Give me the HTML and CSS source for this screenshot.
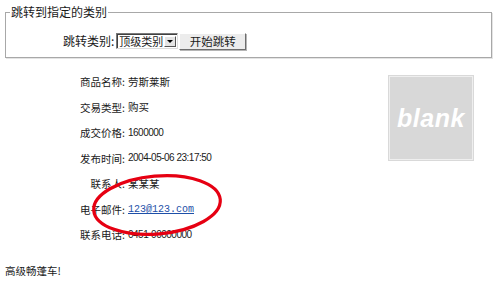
FILE: index.html
```html
<!DOCTYPE html>
<html lang="zh-CN">
<head>
<meta charset="utf-8">
<title>商品详情</title>
<link rel="stylesheet" href="styles.css">
</head>
<body>
<fieldset class="jump">
  <legend class="jump-legend">跳转到指定的类别</legend>
  <div class="jump-row">
    <span class="jump-label">跳转类别:</span>
    <span class="select"><span class="select-text">顶级类别</span><span class="select-arrow"><span class="tri"></span></span></span>
    <button class="btn" type="button">开始跳转</button>
  </div>
</fieldset>

<div class="detail">
  <div class="info">
    <div class="row"><span class="lbl">商品名称:</span><span class="val">劳斯莱斯</span></div>
    <div class="row"><span class="lbl">交易类型:</span><span class="val">购买</span></div>
    <div class="row"><span class="lbl">成交价格:</span><span class="val num">1600000</span></div>
    <div class="row"><span class="lbl">发布时间:</span><span class="val num">2004-05-06 23:17:50</span></div>
    <div class="row"><span class="lbl">联系人:</span><span class="val">某某某</span></div>
    <div class="row"><span class="lbl">电子邮件:</span><span class="val"><a class="mail" href="#">123@123.com</a></span></div>
    <div class="row"><span class="lbl">联系电话:</span><span class="val num">0451-00000000</span></div>
  </div>
  <div class="thumb"><span class="thumb-text">blank</span></div>
</div>

<p class="desc">高级畅蓬车!</p>

<svg class="mark" width="500" height="290" viewBox="0 0 500 290" aria-hidden="true">
  <ellipse cx="157" cy="205" rx="63.5" ry="29" transform="rotate(-5 157 205)" fill="none" stroke="#e60012" stroke-width="3.2"/>
</svg>
</body>
</html>
```

FILE: styles.css
```css
html, body {
  margin: 0;
  padding: 0;
  background: #fff;
}
body {
  position: relative;
  width: 500px;
  height: 290px;
  overflow: hidden;
  padding: 5px 5px 0;
  box-sizing: border-box;
  font-family: "Noto Sans CJK SC", "DejaVu Sans", sans-serif;
  color: #1a1a1a;
}

.jump {
  margin: 0;
  padding: 13px 0 7px 0;
  border: 1px solid #a8a8a8;
  box-shadow: inset 1px 1px 0 #ffffff, 1px 1px 0 #e4e4e4;
  width: 487px;
  box-sizing: border-box;
}
.jump-legend {
  padding: 0 1px;
  margin-left: 4px;
  font-size: 12px;
  line-height: 14px;
}
.jump-row {
  display: flex;
  align-items: center;
  height: 18px;
  padding-left: 57px;
  font-size: 12px;
}
.jump-label {
  margin-right: 2px;
  line-height: 14px;
  white-space: nowrap;
}
.select {
  display: flex;
  align-items: stretch;
  height: 16px;
  width: 62px;
  box-sizing: border-box;
  border: 1px solid #7a7a7a;
  border-right-color: #dcdcdc;
  border-bottom-color: #dcdcdc;
  box-shadow: inset 1px 1px 0 #404040;
  background: #fff;
}
.select-text {
  flex: 1;
  font-size: 11px;
  line-height: 14px;
  padding-left: 2px;
  white-space: nowrap;
  overflow: hidden;
}
.select-arrow {
  flex: none;
  width: 12px;
  margin: 2px 1px 1px 0;
  background: #e4e4e4;
  border: 1px solid #fff;
  border-right-color: #555;
  border-bottom-color: #555;
  box-sizing: border-box;
  display: flex;
  align-items: center;
  justify-content: center;
}
.tri {
  width: 0;
  height: 0;
  border-left: 3px solid transparent;
  border-right: 3px solid transparent;
  border-top: 3px solid #000;
}
.btn {
  margin-left: 1px;
  height: 17px;
  width: 67px;
  padding: 0;
  font-family: "Noto Sans CJK SC", sans-serif;
  font-size: 11.5px;
  line-height: 14px;
  color: #1a1a1a;
  background: #ececec;
  border: 1px solid #fff;
  border-right-color: #6d6d6d;
  border-bottom-color: #6d6d6d;
  box-shadow: 1px 1px 0 #b5b5b5;
}

.detail {
  display: flex;
  margin-top: 11px;
}
.info {
  flex: 1;
}
.row {
  display: grid;
  grid-template-columns: 123px auto;
  height: 25.5px;
  align-items: center;
  font-size: 10.5px;
}
.lbl {
  text-align: right;
  padding-right: 3px;
}
.val {
  line-height: 14px;
}
.num {
  font-family: "Liberation Sans", Arial, sans-serif;
  font-size: 10px;
  letter-spacing: -0.5px;
}
.mail {
  font-family: "Liberation Mono", "Courier New", monospace;
  font-size: 10px;
  color: #1d4fa8;
  text-decoration: underline;
}
.thumb {
  width: 84px;
  height: 84px;
  margin: 7px 22px 0 0;
  box-sizing: border-box;
  background: #d8d8d8;
  border: 1px solid #efefef;
  box-shadow: 0 0 0 1px #d9d9d9;
  display: flex;
  align-items: center;
  justify-content: center;
}
.thumb-text {
  font-family: "Liberation Sans", Arial, sans-serif;
  font-weight: bold;
  font-style: italic;
  font-size: 25px;
  color: #ffffff;
  letter-spacing: 0.5px;
}

.desc {
  margin: 16px 0 0;
  font-size: 10.5px;
  line-height: 14px;
}

.mark {
  position: absolute;
  left: 0;
  top: 0;
  pointer-events: none;
}
```
